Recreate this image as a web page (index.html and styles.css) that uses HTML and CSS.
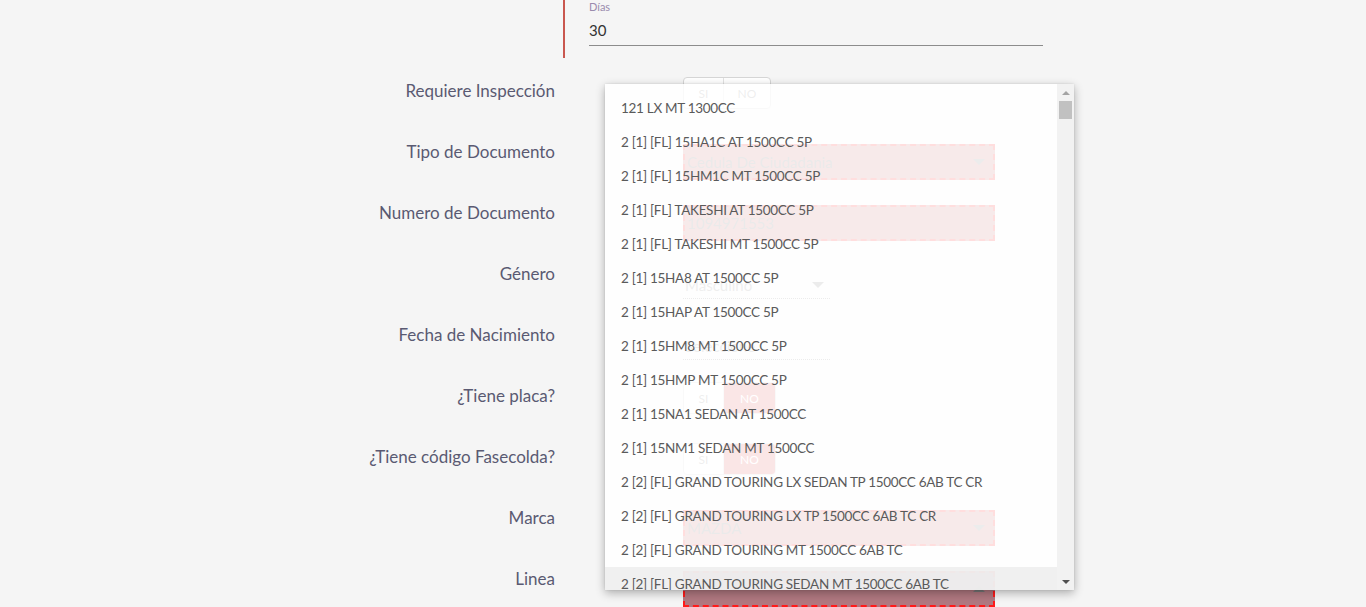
FILE: index.html
```html
<!DOCTYPE html>
<html lang="es">
<head>
<meta charset="utf-8">
<title>Formulario</title>
<link rel="stylesheet" href="styles.css">
</head>
<body>
<div class="top">
  <div class="section">
    <div class="field">
      <div class="field-label">Días</div>
      <div class="field-value">30</div>
    </div>
  </div>
</div>

<div class="form">
  <div class="row">
    <div class="label">Requiere Inspección</div>
    <div class="ctl ctl-toggle"><div class="toggle"><span class="opt">SI</span><span class="opt">NO</span></div></div>
  </div>
  <div class="row">
    <div class="label">Tipo de Documento</div>
    <div class="ctl ctl-box"><div class="box error"><span>Cedula De Ciudadania</span><span class="caret"></span></div></div>
  </div>
  <div class="row">
    <div class="label">Numero de Documento</div>
    <div class="ctl ctl-box"><div class="box error"><span>1094971553</span></div></div>
  </div>
  <div class="row">
    <div class="label">Género</div>
    <div class="ctl ctl-line"><div class="line-select"><span>Masculino</span><span class="caret"></span></div></div>
  </div>
  <div class="row">
    <div class="label">Fecha de Nacimiento</div>
    <div class="ctl ctl-line"><div class="line-select"><span>Seleccione</span></div></div>
  </div>
  <div class="row">
    <div class="label">¿Tiene placa?</div>
    <div class="ctl ctl-toggle"><div class="toggle"><span class="opt">SI</span><span class="opt on">NO</span></div></div>
  </div>
  <div class="row">
    <div class="label">¿Tiene código Fasecolda?</div>
    <div class="ctl ctl-toggle"><div class="toggle"><span class="opt">SI</span><span class="opt on">NO</span></div></div>
  </div>
  <div class="row">
    <div class="label">Marca</div>
    <div class="ctl ctl-box"><div class="box error"><span>MAZDA</span><span class="caret"></span></div></div>
  </div>
  <div class="row">
    <div class="label">Linea</div>
    <div class="ctl ctl-box"><div class="box error dark"><span></span><span class="caret up"></span></div></div>
  </div>
</div>

<div class="dropdown">
  <ul class="list">
    <li>121 LX MT 1300CC</li>
    <li>2 [1] [FL] 15HA1C AT 1500CC 5P</li>
    <li>2 [1] [FL] 15HM1C MT 1500CC 5P</li>
    <li>2 [1] [FL] TAKESHI AT 1500CC 5P</li>
    <li>2 [1] [FL] TAKESHI MT 1500CC 5P</li>
    <li>2 [1] 15HA8 AT 1500CC 5P</li>
    <li>2 [1] 15HAP AT 1500CC 5P</li>
    <li>2 [1] 15HM8 MT 1500CC 5P</li>
    <li>2 [1] 15HMP MT 1500CC 5P</li>
    <li>2 [1] 15NA1 SEDAN AT 1500CC</li>
    <li>2 [1] 15NM1 SEDAN MT 1500CC</li>
    <li>2 [2] [FL] GRAND TOURING LX SEDAN TP 1500CC 6AB TC CR</li>
    <li>2 [2] [FL] GRAND TOURING LX TP 1500CC 6AB TC CR</li>
    <li>2 [2] [FL] GRAND TOURING MT 1500CC 6AB TC</li>
    <li class="hover">2 [2] [FL] GRAND TOURING SEDAN MT 1500CC 6AB TC</li>
  </ul>
  <div class="scrollbar">
    <div class="arrow arrow-up"></div>
    <div class="thumb"></div>
    <div class="track"></div>
    <div class="arrow arrow-down"></div>
  </div>
</div>
</body>
</html>
```

FILE: styles.css
```css
* { box-sizing: border-box; }
html, body { margin: 0; padding: 0; }
body {
  background: #f5f5f5;
  font-family: "Source Sans Pro", Lato, "Liberation Sans", sans-serif;
  width: 1366px;
  height: 607px;
  overflow: hidden;
  position: relative;
}

.top { padding-left: 563px; height: 60px; }
.section {
  border-left: 2px solid #c9574f;
  height: 58px;
  padding-left: 24px;
}
.field { width: 454px; border-bottom: 1px solid #8c8c8c; height: 46px; }
.field-label {
  font-size: 11px;
  color: #9a8cae;
  line-height: 13px;
}
.field-value {
  font-size: 15px;
  color: #333;
  line-height: 20px;
  padding-top: 7px;
}

.form { display: flex; flex-direction: column; }
.row {
  display: grid;
  grid-template-columns: 555px 1fr;
  column-gap: 128px;
  height: 61px;
}
.label {
  font-size: 17px;
  color: #5a5a72;
  text-align: right;
  align-self: center;
  line-height: 20px;
}
.ctl { position: relative; }
.ctl-toggle { padding-top: 17px; }
.ctl-box { padding-top: 23px; }
.ctl-line { padding-top: 28px; }

.toggle {
  display: inline-flex;
  height: 32px;
  border: 1px solid #d6d6d6;
  border-radius: 4px;
  overflow: hidden;
  background: #fff;
}
.opt {
  font-size: 12px;
  color: #888;
  display: flex;
  align-items: center;
  justify-content: center;
  width: 41px;
  border-right: 1px solid #e2e2e2;
}
.opt:first-child { width: 40px; }
.opt:last-child { border-right: none; width: 46px; }
.opt.on { background: #dc5050; color: #fff; width: 51px; }

.box {
  width: 312px;
  height: 36px;
  border: 2px dashed #ff1a1a;
  background: #c8686a;
  display: flex;
  align-items: center;
  justify-content: space-between;
  padding: 0 8px 0 2px;
  font-size: 15px;
  color: #6a6a6a;
}
.box.dark { background: #b07880; }
.caret {
  width: 0; height: 0;
  border-left: 6px solid transparent;
  border-right: 6px solid transparent;
  border-top: 6px solid #777;
}
.caret.up { border-top: none; border-bottom: 6px solid #777; }

.line-select {
  width: 147px;
  height: 28px;
  border-bottom: 1px dotted #777;
  display: flex;
  align-items: center;
  justify-content: space-between;
  padding: 0 6px 0 2px;
  font-size: 15px;
  color: #888;
}

.dropdown {
  position: absolute;
  left: 605px;
  top: 84px;
  width: 469px;
  height: 506px;
  background: rgba(255, 255, 255, 0.86);
  box-shadow: 0 3px 9px rgba(0, 0, 0, 0.3), 0 0 2px rgba(0,0,0,0.1);
  display: flex;
  overflow: hidden;
}
.list {
  list-style: none;
  margin: 0;
  padding: 7px 0 0 0;
  flex: 1;
  overflow: hidden;
}
.list li {
  height: 34px;
  line-height: 34px;
  padding-left: 16px;
  font-size: 13.5px;
  letter-spacing: -0.3px;
  color: #5a5a5a;
  white-space: nowrap;
}
.list li.hover { background: rgba(235, 235, 235, 0.75); }

.scrollbar {
  width: 17px;
  background: rgba(241, 241, 241, 0.95);
  display: flex;
  flex-direction: column;
  align-items: center;
}
.arrow { width: 17px; height: 17px; display: flex; align-items: center; justify-content: center; }
.arrow-up::before {
  content: "";
  border-left: 4px solid transparent;
  border-right: 4px solid transparent;
  border-bottom: 4px solid #a3a3a3;
}
.arrow-down::before {
  content: "";
  border-left: 4px solid transparent;
  border-right: 4px solid transparent;
  border-top: 4px solid #505050;
}
.thumb { width: 13px; height: 18px; background: #c1c1c1; }
.track { flex: 1; }
```
